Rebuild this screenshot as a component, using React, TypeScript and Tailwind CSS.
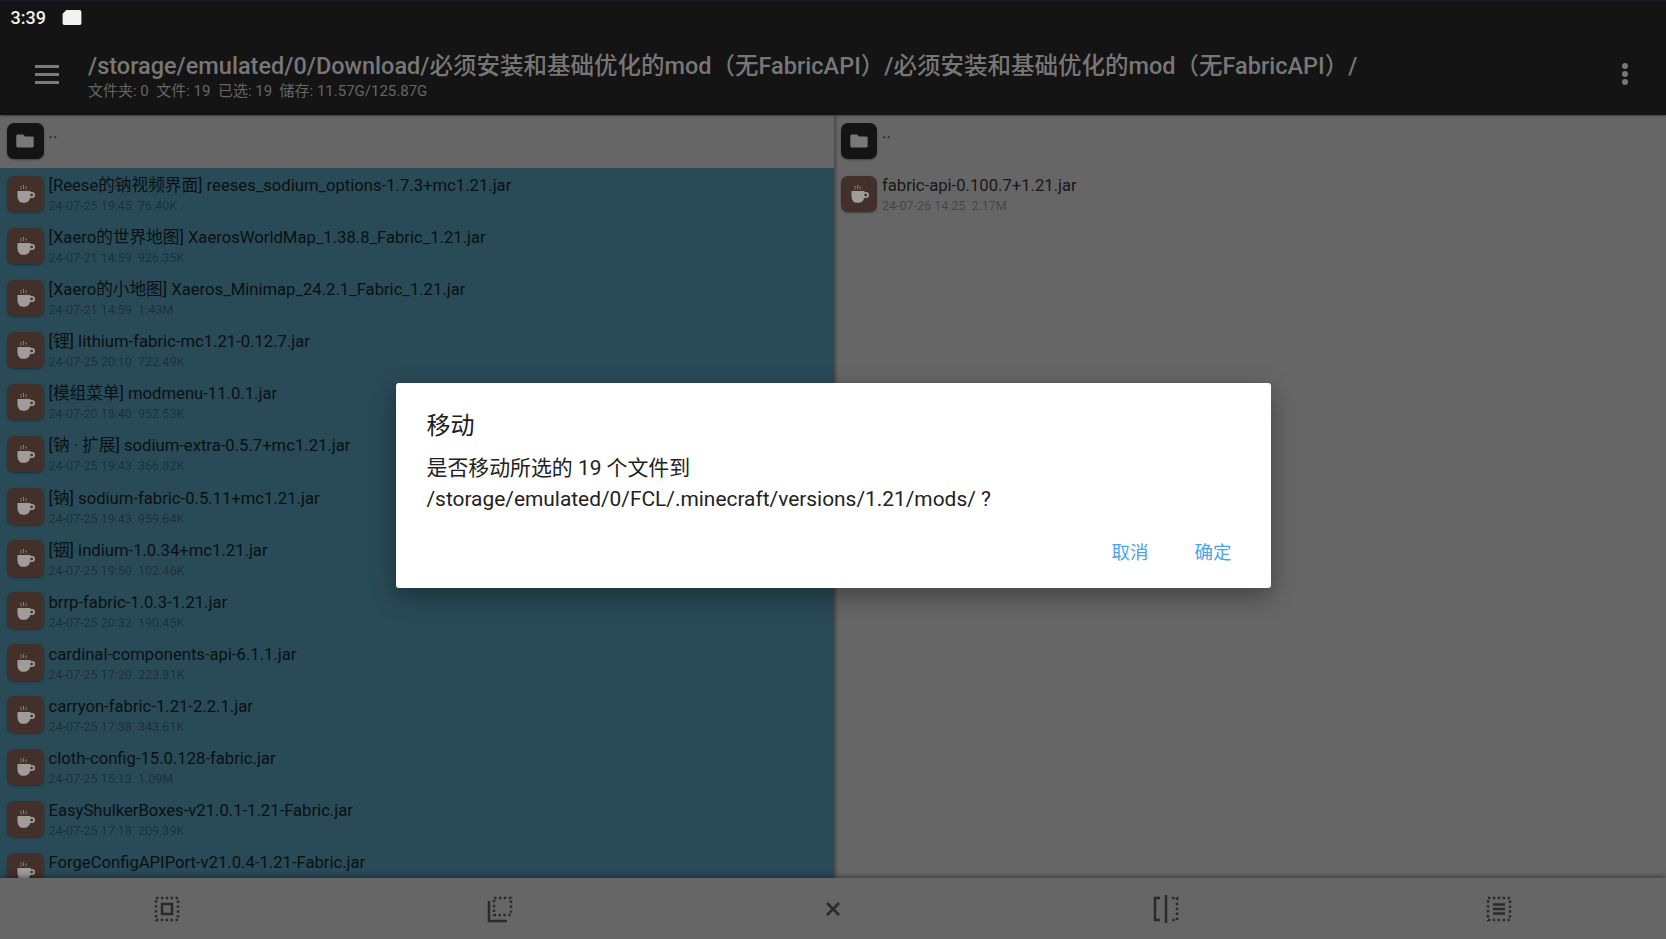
const jarFiles = [
  { name: '[Reese的钠视频界面] reeses_sodium_options-1.7.3+mc1.21.jar', meta: '24-07-25 19:45  76.40K' },
  { name: '[Xaero的世界地图] XaerosWorldMap_1.38.8_Fabric_1.21.jar', meta: '24-07-21 14:59  926.35K' },
  { name: '[Xaero的小地图] Xaeros_Minimap_24.2.1_Fabric_1.21.jar', meta: '24-07-21 14:59  1.43M' },
  { name: '[锂] lithium-fabric-mc1.21-0.12.7.jar', meta: '24-07-25 20:10  722.49K' },
  { name: '[模组菜单] modmenu-11.0.1.jar', meta: '24-07-20 18:40  952.53K' },
  { name: '[钠 · 扩展] sodium-extra-0.5.7+mc1.21.jar', meta: '24-07-25 19:43  366.82K' },
  { name: '[钠] sodium-fabric-0.5.11+mc1.21.jar', meta: '24-07-25 19:43  959.64K' },
  { name: '[铟] indium-1.0.34+mc1.21.jar', meta: '24-07-25 19:50  102.46K' },
  { name: 'brrp-fabric-1.0.3-1.21.jar', meta: '24-07-25 20:32  190.45K' },
  { name: 'cardinal-components-api-6.1.1.jar', meta: '24-07-25 17:20  223.81K' },
  { name: 'carryon-fabric-1.21-2.2.1.jar', meta: '24-07-25 17:38  343.61K' },
  { name: 'cloth-config-15.0.128-fabric.jar', meta: '24-07-25 15:13  1.09M' },
  { name: 'EasyShulkerBoxes-v21.0.1-1.21-Fabric.jar', meta: '24-07-25 17:18  209.39K' },
  { name: 'ForgeConfigAPIPort-v21.0.4-1.21-Fabric.jar', meta: '24-07-25 17:17  301.34K' },
]

function FolderIcon() {
  return (
    <svg viewBox="0 0 24 24" className="h-[22px] w-[22px]" fill="#787878">
      <path d="M4 5h6l2 2h8a1.500 1.500 0 0 1 1.500 1.500v9A1.500 1.500 0 0 1 20 19H4a1.500 1.500 0 0 1-1.500-1.500v-11A1.500 1.500 0 0 1 4 5z" />
    </svg>
  )
}

function CupIcon() {
  return (
    <svg viewBox="0 0 24 24" className="h-[24px] w-[24px]">
      <path
        d="M4.500 9h13v1h1.500a3 3 0 0 1 0 6h-1.800c-.8 2.800-3 4.800-5.700 4.800h-1.500c-3.500 0-5.500-3-5.500-6.800z"
        fill="#a09c9a"
      />
      <path d="M17.500 11.800h1.300a1.200 1.200 0 0 1 0 2.400h-1.400c.1-.8.100-1.600.1-2.400z" fill="#43302b" />
      <path d="M8 4v3.500M10.500 3v4.500M13 4.500v3" stroke="#a09c9a" strokeWidth="1" strokeDasharray="1.500 .8" fill="none" />
    </svg>
  )
}

function FileRow({ name, meta, selected }: { name: string; meta?: string; selected?: boolean }) {
  return (
    <div className={`flex h-[52.1px] shrink-0 px-[7px] pt-[7.500px] ${selected ? 'bg-[#294a57]' : ''}`}>
      <div
        className={`flex h-[36.500px] w-[36.500px] shrink-0 items-center justify-center rounded-[7px] shadow-[0_1px_2px_rgba(0,0,0,0.35)] ${
          meta ? 'bg-[#43302b]' : 'bg-[#141414]'
        }`}
      >
        {meta ? <CupIcon /> : <FolderIcon />}
      </div>
      <div className="ml-[5px] min-w-0 pt-[.5px]">
        <div className="whitespace-nowrap text-[16.650px] leading-[20px] text-black/80">{name}</div>
        {meta && <div className="whitespace-pre text-[12.500px] leading-[20px] text-black/35">{meta}</div>}
      </div>
    </div>
  )
}

function ToolIcon({ children }: { children: React.ReactNode }) {
  return (
    <div className="flex flex-1 items-center justify-center">
      <svg viewBox="0 0 28 28" className="h-[28px] w-[28px] text-[#2a2a2a]" fill="none" stroke="currentColor">
        {children}
      </svg>
    </div>
  )
}

export default function App() {
  return (
    <div className="relative flex h-[939px] w-[1666px] flex-col overflow-hidden bg-[#666] font-['Roboto','Noto_Sans_CJK_SC',sans-serif]">
      <div className="h-[33px] shrink-0 border-t border-[#1a1a2e] bg-[#141414] pl-[10.500px] pt-[4.500px]">
        <div className="flex items-center">
          <span className="text-[18px] leading-[24px] font-medium text-[#f2f2f2]">3:39</span>
          <svg viewBox="0 0 20 16" className="ml-[16px] h-[15px] w-[20px]" fill="#f2f2f2">
            <path d="M4 0h14a2 2 0 0 1 2 2v12a2 2 0 0 1-2 2H2a2 2 0 0 1-2-2V4z" />
          </svg>
        </div>
      </div>

      <header className="flex h-[82px] shrink-0 items-center bg-[#141414] shadow-[0_1px_2px_rgba(0,0,0,0.4)]">
        <div className="ml-[35px] flex w-[53px] flex-col gap-[5px]">
          <span className="h-[3px] w-[24px] bg-[#7a7a7a]" />
          <span className="h-[3px] w-[24px] bg-[#7a7a7a]" />
          <span className="h-[3px] w-[24px] bg-[#7a7a7a]" />
        </div>
        <div className="min-w-0 flex-1 pt-[3px]">
          <div className="whitespace-nowrap text-[23.500px] leading-[28px] font-medium text-[#777]">
            /storage/emulated/0/Download/必须安装和基础优化的mod（无FabricAPI）/必须安装和基础优化的mod（无FabricAPI）/
          </div>
          <div className="mt-[2px] whitespace-pre text-[15px] leading-[18px] text-[#666]">
            文件夹: 0  文件: 19  已选: 19  储存: 11.57G/125.87G
          </div>
        </div>
        <div className="mr-[38px] flex flex-col gap-[2px]">
          <span className="h-[6px] w-[6px] rounded-full bg-[#777]" />
          <span className="h-[6px] w-[6px] rounded-full bg-[#777]" />
          <span className="h-[6px] w-[6px] rounded-full bg-[#777]" />
        </div>
      </header>

      <div className="flex min-h-0 flex-1">
        <div className="z-[1] flex w-[833.500px] shrink-0 flex-col overflow-hidden shadow-[2px_0_3px_rgba(0,0,0,0.3)]">
          <div className="h-[53px] shrink-0">
            <FileRow name=".." />
          </div>
          {jarFiles.map((f) => (
            <FileRow key={f.name} name={f.name} meta={f.meta} selected />
          ))}
        </div>
        <div className="flex min-w-0 flex-1 flex-col">
          <div className="h-[53px] shrink-0">
            <FileRow name=".." />
          </div>
          <FileRow name="fabric-api-0.100.7+1.21.jar" meta="24-07-26 14:25  2.17M" />
        </div>
      </div>

      <footer className="z-10 flex h-[61px] shrink-0 bg-[#666] shadow-[0_-2px_5px_rgba(0,0,0,0.35)]">
        <ToolIcon>
          <rect x="3" y="3" width="22" height="22" strokeWidth="2.500" strokeDasharray="2.400 2.500" />
          <rect x="9" y="9" width="10" height="10" strokeWidth="2.500" />
        </ToolIcon>
        <ToolIcon>
          <path d="M3 6v20h18" strokeWidth="2.500" />
          <path d="M8 3h17v17H8z" strokeWidth="2.500" strokeDasharray="2.400 2.500" />
        </ToolIcon>
        <ToolIcon>
          <path d="M8 8l12 12M20 8L8 20" strokeWidth="2.500" />
        </ToolIcon>
        <ToolIcon>
          <path d="M8 3H3v22h5" strokeWidth="2.500" />
          <path d="M14 0v28" strokeWidth="2.500" />
          <path d="M20 3h5v22h-5" strokeWidth="2.500" strokeDasharray="2.400 2.500" />
        </ToolIcon>
        <ToolIcon>
          <rect x="3" y="3" width="22" height="22" strokeWidth="2.500" strokeDasharray="2.400 2.500" />
          <path d="M8 9.500h12M8 14h12M8 18.500h12" strokeWidth="2.500" />
        </ToolIcon>
      </footer>

      <div className="absolute inset-x-0 top-[32px] bottom-0 z-20 flex items-center justify-center">
        <div className="h-[205px] w-[875px] rounded-[3px] bg-white pt-[23px] pl-[31px] shadow-[0_8px_24px_rgba(0,0,0,0.35)]">
          <div className="text-[24px] leading-[40px] text-[#1c1c1c]">移动</div>
          <div className="mt-[7px] text-[20.900px] leading-[31px] text-[#222]">
            <div>是否移动所选的 19 个文件到</div>
            <div>/storage/emulated/0/FCL/.minecraft/versions/1.21/mods/ ?</div>
          </div>
          <div className="mt-[26px] flex justify-end gap-[46px] pr-[39px] text-[18.500px] leading-[24px] text-[#4ca3e8]">
            <span>取消</span>
            <span>确定</span>
          </div>
        </div>
      </div>
    </div>
  )
}
